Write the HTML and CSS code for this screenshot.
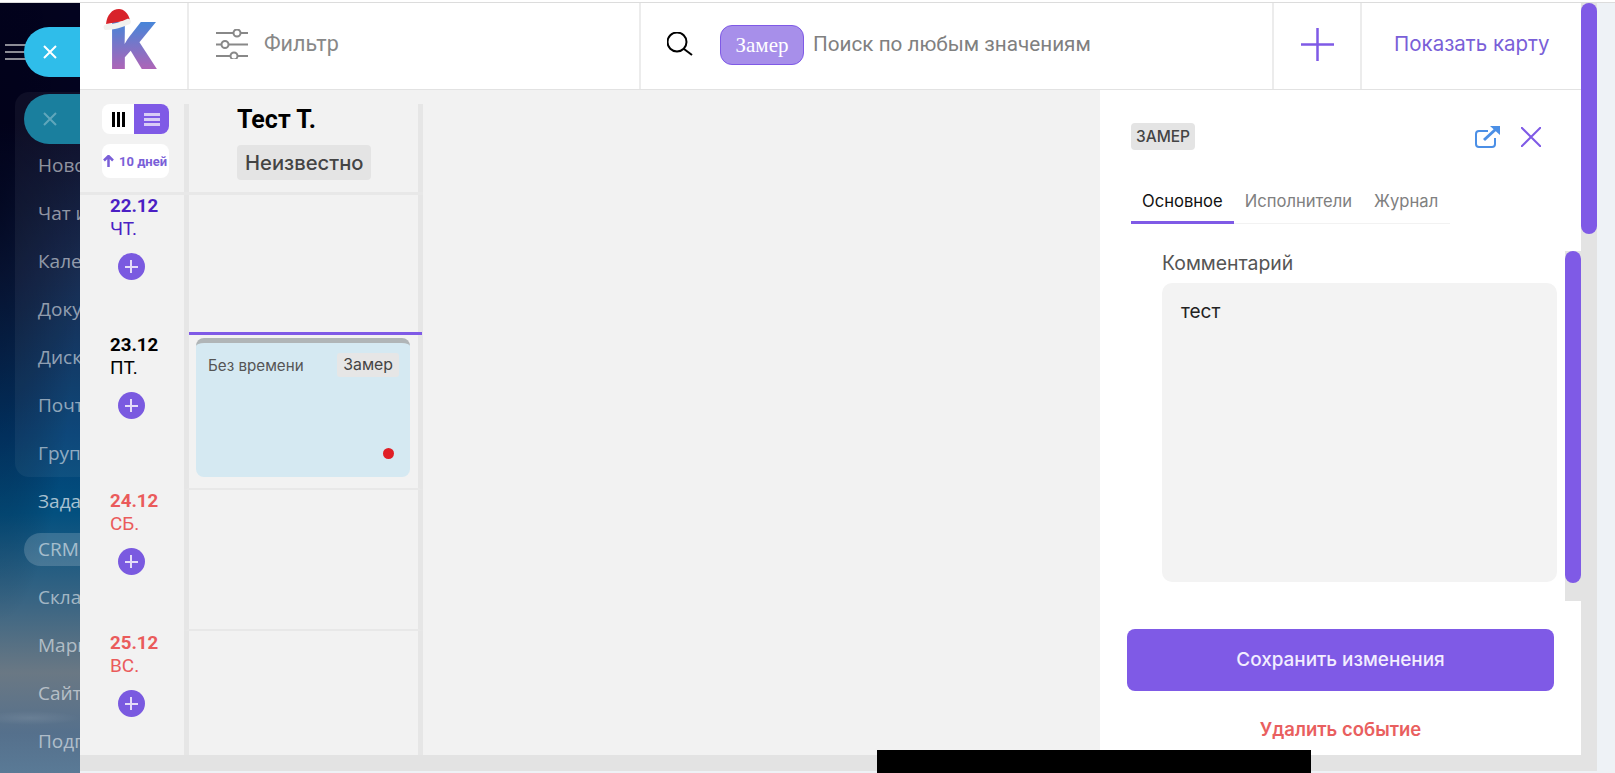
FILE: index.html
```html
<!DOCTYPE html>
<html lang="ru">
<head>
    <meta charset="utf-8">
    <title>Календарь</title>
    <link rel="stylesheet" href="styles.css">
</head>
<body>
    <div class="topline"></div>
    <div class="page">
        <div class="side">
            <div class="side-top">
                <div class="burger"><span></span><span></span><span></span></div>
                <div class="side-pill"><svg width="16" height="16" viewBox="0 0 16 16"><path d="M2 2l12 12M14 2L2 14" stroke="#fff" stroke-width="2"/></svg></div>
            </div>
            <div class="side-group">
                <div class="side-pill dim"><svg width="16" height="16" viewBox="0 0 16 16"><path d="M2 2l12 12M14 2L2 14" stroke="#fff" stroke-width="2"/></svg></div>
                <div class="side-item">Новости</div>
                <div class="side-item">Чат и звонки</div>
                <div class="side-item">Календарь</div>
                <div class="side-item">Документы</div>
                <div class="side-item">Диск</div>
                <div class="side-item">Почта</div>
                <div class="side-item">Группы</div>
            </div>
            <div class="side-list">
                <div class="side-item bright">Задачи</div>
                <div class="side-item"><span class="crm">CRM</span></div>
                <div class="side-item">Склад</div>
                <div class="side-item">Маркетинг</div>
                <div class="side-item">Сайты</div>
                <div class="side-item">Подписка</div>
            </div>
        </div>

        <div class="app">
            <div class="header">
                <div class="logo-cell">
                    <span class="logo">K</span>
                    <svg class="hat" width="28" height="22" viewBox="0 0 28 22">
                        <path d="M3 15C4 6 9 0 16 0c5 0 9 4 11 11z" fill="#d8232a"/>
                        <path d="M2 21c-3-3-1-6 3-6 6 0 13-2 19-5 3-1 5 2 3 5-7 3-16 6-25 6z" fill="#f1f1ee"/>
                    </svg>
                </div>
                <div class="filter-cell">
                    <svg width="32" height="30" viewBox="0 0 32 30" fill="none" stroke="#888" stroke-width="2">
                        <path d="M0 4h17M25 4h7M0 15.500h5M13 15.500h19M0 27h14M22 27h10"/>
                        <circle cx="21" cy="4" r="3.500"/>
                        <circle cx="9" cy="15.500" r="3.500"/>
                        <circle cx="18" cy="27" r="3.500"/>
                    </svg>
                    <span class="filter-text">Фильтр</span>
                </div>
                <div class="search-cell">
                    <svg width="26" height="24" viewBox="0 0 26 24" fill="none" stroke="#000" stroke-width="2">
                        <circle cx="10" cy="10" r="9.500"/>
                        <path d="M17 17l8 6"/>
                    </svg>
                    <span class="search-chip">Замер</span>
                    <span class="search-text">Поиск по любым значениям</span>
                </div>
                <div class="add-cell">
                    <svg width="33" height="33" viewBox="0 0 33 33" stroke="#7f5ae6" stroke-width="2.500"><path d="M0 16.500h33M16.500 0v33"/></svg>
                </div>
                <div class="map-cell">Показать карту</div>
            </div>

            <div class="board">
                <div class="grid">
                    <div class="head-row">
                        <div class="head-dates">
                            <div class="toggle">
                                <div class="toggle-left">
                                    <svg width="13" height="15" viewBox="0 0 13 15" fill="#000"><path d="M0 0h3v15H0zM5 0h3v15H5zM10 0h3v15h-3z"/></svg>
                                </div>
                                <div class="toggle-right">
                                    <svg width="16" height="13" viewBox="0 0 16 13" fill="#d9ccf6"><path d="M0 0h16v3H0zM0 5h16v3H0zM0 10h16v3H0z"/></svg>
                                </div>
                            </div>
                            <div class="more-days">
                                <svg width="11" height="12" viewBox="0 0 11 12" fill="none" stroke="#7a5fd8" stroke-width="2.500"><path d="M5.500 12V1M1 5.500L5.500 1 10 5.500"/></svg>
                                <span>10 дней</span>
                            </div>
                        </div>
                        <div class="head-cell">
                            <div class="person">Тест Т.</div>
                            <span class="person-status">Неизвестно</span>
                        </div>
                    </div>

                    <div class="row row-first">
                        <div class="date-cell today">
                            <div class="date">22.12</div>
                            <div class="day">ЧТ.</div>
                            <div class="day-add"></div>
                        </div>
                        <div class="cell"></div>
                    </div>
                    <div class="row row-second">
                        <div class="date-cell">
                            <div class="date">23.12</div>
                            <div class="day">ПТ.</div>
                            <div class="day-add"></div>
                        </div>
                        <div class="cell lined">
                            <div class="now-line"></div>
                            <div class="event">
                                <div class="event-head">
                                    <span>Без времени</span>
                                    <span class="event-type">Замер</span>
                                </div>
                                <div class="event-dot"></div>
                            </div>
                        </div>
                    </div>
                    <div class="row row-third">
                        <div class="date-cell weekend">
                            <div class="date">24.12</div>
                            <div class="day">СБ.</div>
                            <div class="day-add"></div>
                        </div>
                        <div class="cell lined"></div>
                    </div>
                    <div class="row row-fourth">
                        <div class="date-cell weekend">
                            <div class="date">25.12</div>
                            <div class="day">ВС.</div>
                            <div class="day-add"></div>
                        </div>
                        <div class="cell"></div>
                    </div>
                </div>

                <div class="panel">
                    <div class="panel-top">
                        <span class="panel-type">ЗАМЕР</span>
                        <div class="panel-icons">
                            <svg width="25" height="22" viewBox="0 0 25 22" fill="none" stroke="#4b8fe6" stroke-width="2">
                                <path d="M13 5H4a3 3 0 0 0-3 3v10a3 3 0 0 0 3 3h13a3 3 0 0 0 3-3v-6"/>
                                <path d="M9 14L21 3" stroke-width="3"/>
                                <path d="M15 0h10v9z" fill="#4b8fe6" stroke="none"/>
                            </svg>
                            <svg width="20" height="20" viewBox="0 0 20 20" stroke="#7f5ae6" stroke-width="2"><path d="M0 0l20 20M20 0L0 20"/></svg>
                        </div>
                    </div>
                    <div class="tabs">
                        <div class="tab active">Основное</div>
                        <div class="tab">Исполнители</div>
                        <div class="tab">Журнал</div>
                    </div>
                    <div class="panel-body">
                        <div class="panel-form">
                            <div class="field-label">Комментарий</div>
                            <div class="comment">тест</div>
                        </div>
                        <div class="inner-bar"><div class="inner-thumb"></div></div>
                    </div>
                    <div class="save-btn">Сохранить изменения</div>
                    <div class="delete-btn">Удалить событие</div>
                </div>
            </div>

            <div class="hbar"></div>
        </div>

        <div class="vbar">
            <div class="vthumb"></div>
        </div>
    </div>
    <div class="masked"></div>
</body>
</html>
```

FILE: styles.css
```css
* {
    box-sizing: border-box;
}
html, body {
    margin: 0;
    height: 773px;
    overflow: hidden;
}
body {
    background: #eef2f6;
    font-family: "Inter", "Liberation Sans", sans-serif;
    position: relative;
}
.topline {
    height: 3px;
    background: #fff;
    border-bottom: 1px solid #dcdcdc;
}
.page {
    display: flex;
    height: 770px;
}

/* left menu behind the slider */
.side {
    width: 80px;
    flex-shrink: 0;
    overflow: hidden;
    font-family: "Open Sans", "Noto Sans", sans-serif;
    background:
        radial-gradient(ellipse 50px 7px at 30px 715px, rgba(255,255,255,.09), transparent),
        radial-gradient(ellipse 80px 420px at 0 200px, rgba(0,0,20,.55), transparent),
        linear-gradient(180deg, #03031f 0, #03031f 120px, #0c2148 270px, #023e73 430px, #03507f 510px, #3a6583 600px, #6a7884 670px, #55708c 730px, #5a7a96 770px);
}
.side-top {
    display: flex;
    align-items: center;
    margin-top: 24px;
    height: 50px;
}
.burger {
    width: 21px;
    margin-left: 5px;
    display: flex;
    flex-direction: column;
    gap: 5px;
    flex-shrink: 0;
}
.burger span {
    height: 2px;
    background: #8c8c96;
}
.side-pill {
    width: 120px;
    height: 50px;
    flex-shrink: 0;
    margin-left: -2px;
    padding-left: 18px;
    display: flex;
    align-items: center;
    border-radius: 25px;
    background: #2fbdea;
}
.side-pill.dim {
    margin: 2px 0 -3px 9px;
    background: #1a7f9e;
}
.side-pill.dim svg {
    opacity: .3;
}
.side-group {
    margin: 15px 0 0 15px;
    width: 120px;
    border-radius: 14px;
    background: rgba(255,255,255,.05);
    overflow: hidden;
}
.side-list {
    margin-left: 15px;
}
.side-item {
    height: 48px;
    padding-left: 23px;
    line-height: 48px;
    font-size: 19px;
    white-space: nowrap;
    color: rgba(255,255,255,.55);
}
.side-item.bright {
    color: rgba(255,255,255,.66);
}
.crm {
    display: inline-block;
    height: 33px;
    width: 120px;
    margin-left: -14px;
    padding-left: 14px;
    line-height: 33px;
    border-radius: 17px;
    background: rgba(255,255,255,.17);
}

.app {
    width: 1501px;
    flex-shrink: 0;
    display: flex;
    flex-direction: column;
}

/* top bar */
.header {
    display: flex;
    height: 87px;
    background: #fff;
    border-bottom: 1px solid #e2e2e2;
}
.logo-cell {
    width: 109px;
    position: relative;
    border-right: 2px solid #ececec;
}
.logo {
    display: block;
    padding: 2px 0 0 29px;
    font-size: 65px;
    font-weight: 900;
    line-height: 82px;
    background: linear-gradient(180deg, #4287da 20%, #b064b6 80%);
    -webkit-background-clip: text;
    background-clip: text;
    color: transparent;
}
.hat {
    position: absolute;
    left: 23px;
    top: 6px;
}
.filter-cell {
    width: 452px;
    display: flex;
    align-items: center;
    gap: 16px;
    padding: 0 0 5px 27px;
    border-right: 2px solid #ececec;
}
.filter-text {
    font-family: "Roboto", sans-serif;
    font-size: 21.500px;
    color: #888;
}
.search-cell {
    width: 633px;
    display: flex;
    align-items: center;
    padding: 0 0 5px 26px;
    border-right: 2px solid #ececec;
}
.search-chip {
    width: 84px;
    height: 40px;
    margin: 3px 9px 0 27px;
    text-align: center;
    line-height: 38px;
    font-family: "Liberation Serif", serif;
    font-size: 21px;
    color: #fff;
    background: #a78fea;
    border: 1px solid #7f5ae6;
    border-radius: 12px;
}
.search-text {
    font-family: "Roboto", sans-serif;
    font-size: 20.700px;
    margin-top: 1px;
    color: #808080;
}
.add-cell {
    width: 88px;
    display: flex;
    align-items: center;
    justify-content: center;
    padding-bottom: 4px;
    border-right: 2px solid #ececec;
}
.map-cell {
    flex: 1;
    padding: 0 0 5px 32px;
    display: flex;
    align-items: center;
    font-size: 20.500px;
    color: #7a5fd8;
}

/* calendar */
.board {
    display: flex;
    height: 665px;
    background: #f2f2f2;
}
.grid {
    width: 343px;
}
.head-row {
    display: flex;
    height: 105px;
    border-bottom: 3px solid #e8e8e8;
}
.head-dates {
    width: 104px;
    padding: 14px 15px 0 22px;
}
.toggle {
    display: flex;
    height: 30px;
    border-radius: 8px;
    overflow: hidden;
    background: #fff;
}
.toggle-left, .toggle-right {
    display: flex;
    align-items: center;
    justify-content: center;
}
.toggle-left {
    width: 32px;
}
.toggle-right {
    flex: 1;
    background: #7f5ae6;
}
.more-days {
    display: flex;
    align-items: center;
    gap: 5px;
    height: 34px;
    margin-top: 10px;
    padding-left: 1px;
    border-radius: 8px;
    background: #fff;
    font-family: "Roboto", sans-serif;
    font-size: 13px;
    font-weight: 700;
    white-space: nowrap;
    color: #7a5fd8;
}
.head-cell {
    width: 239px;
    margin-top: 14px;
    padding-left: 48px;
    border-left: 5px solid #e6e6e6;
    border-right: 5px solid #e6e6e6;
}
.person {
    font-family: "Roboto", sans-serif;
    font-size: 25px;
    font-weight: 700;
    line-height: 32px;
    color: #000;
}
.person-status {
    display: inline-block;
    height: 35px;
    margin-top: 9px;
    padding: 0 8px;
    line-height: 35px;
    border-radius: 4px;
    background: #e4e4e4;
    font-size: 20.200px;
    font-weight: 500;
    color: #444;
}
.row {
    display: flex;
}
.row-first { height: 137px; }
.row-second { height: 158px; }
.row-third { height: 141px; }
.row-fourth { height: 124px; }
.date-cell {
    width: 104px;
    padding: 1px 0 0 30px;
    font-family: "Roboto", sans-serif;
    color: #000;
}
.row-first .date-cell, .row-third .date-cell {
    padding-top: 0;
}
.row-second .date-cell {
    padding-top: 2px;
}
.today { color: #4b1fc4; }
.weekend { color: #ea5b5b; }
.date {
    font-size: 18.700px;
    font-weight: 700;
    line-height: 23px;
}
.day {
    margin-top: -1px;
    font-size: 19px;
    line-height: 23px;
}
.day-add {
    position: relative;
    width: 27px;
    height: 27px;
    margin: 13px 0 0 7.500px;
    border-radius: 50%;
    background: #7a5ae0;
}
.day-add::before, .day-add::after {
    content: "";
    position: absolute;
    background: #e5dcf8;
}
.day-add::before {
    left: 7px;
    right: 7px;
    top: 12.500px;
    height: 2px;
}
.day-add::after {
    top: 7px;
    bottom: 7px;
    left: 12.500px;
    width: 2px;
}
.cell {
    width: 239px;
    border-left: 5px solid #e6e6e6;
    border-right: 5px solid #e6e6e6;
}
.cell.lined {
    border-bottom: 2px solid #e8e8e8;
}
.now-line {
    height: 3px;
    margin-right: -4px;
    background: #7f5ae6;
}
.event {
    display: flex;
    flex-direction: column;
    height: 139px;
    margin: 3px 8px 0 7px;
    border-top: 5px solid #b0b5b7;
    border-radius: 8px;
    background: #d5e9f2;
}
.event-head {
    display: flex;
    justify-content: space-between;
    align-items: center;
    padding: 10px 11px 0 12px;
    font-size: 15.200px;
    color: #555;
}
.event-type {
    height: 24px;
    padding: 0 6px;
    line-height: 24px;
    border-radius: 3px;
    background: #e6e6e6;
    font-size: 15.800px;
    color: #444;
}
.event-dot {
    width: 11px;
    height: 11px;
    margin: auto 16px 18px auto;
    border-radius: 50%;
    background: #e01f26;
}

/* right slider panel */
.panel {
    margin-left: auto;
    width: 481px;
    background: #fff;
    display: flex;
    flex-direction: column;
}
.panel-top {
    display: flex;
    justify-content: space-between;
    align-items: center;
    height: 27px;
    margin-top: 33px;
    padding: 0 40px 0 31px;
}
.panel-type {
    width: 64px;
    height: 27px;
    line-height: 27px;
    text-align: center;
    border-radius: 4px;
    background: #e4e4e4;
    font-size: 15.500px;
    font-weight: 500;
    color: #444;
}
.panel-icons {
    display: flex;
    align-items: center;
    gap: 21px;
}
.tabs {
    display: flex;
    width: 319px;
    height: 45px;
    margin: 29px 0 0 31px;
    border-bottom: 1px solid #f2f2f2;
}
.tab {
    padding: 0 11px;
    font-size: 16.600px;
    line-height: 44px;
    white-space: nowrap;
    color: #808080;
}
.tab.active {
    height: 45px;
    color: #111;
    border-bottom: 3px solid #7f5ae6;
}
.panel-body {
    display: flex;
    height: 350px;
    margin-top: 27px;
    padding-left: 62px;
}
.panel-form {
    width: 395px;
}
.field-label {
    font-size: 19.400px;
    line-height: 24px;
    color: #555;
}
.comment {
    height: 299px;
    margin-top: 8px;
    padding: 17px 19px;
    border-radius: 10px;
    background: #f3f3f3;
    font-size: 19px;
    color: #222;
}
.inner-bar {
    width: 16px;
    margin-left: 8px;
    background: #e3e3e3;
}
.inner-thumb {
    height: 332px;
    border-radius: 8px;
    background: #7f5ae6;
}
.save-btn {
    width: 427px;
    height: 62px;
    margin: 28px 0 0 27px;
    line-height: 62px;
    text-align: center;
    border-radius: 8px;
    background: #7f5ae6;
    font-size: 18.900px;
    font-weight: 500;
    color: #f2edff;
}
.delete-btn {
    margin-top: 26px;
    text-align: center;
    font-size: 18.500px;
    font-weight: 600;
    line-height: 24px;
    color: #e95f5f;
}
.hbar {
    height: 16px;
    background: #e3e3e3;
}
.vbar {
    width: 16px;
    flex-shrink: 0;
    height: 768px;
    background: #e3e3e3;
}
.vthumb {
    height: 231px;
    border-radius: 8px;
    background: #7f5ae6;
}

/* blacked out part of the screenshot */
.masked {
    position: absolute;
    left: 877px;
    top: 750px;
    width: 434px;
    height: 23px;
    background: #000;
}
```
